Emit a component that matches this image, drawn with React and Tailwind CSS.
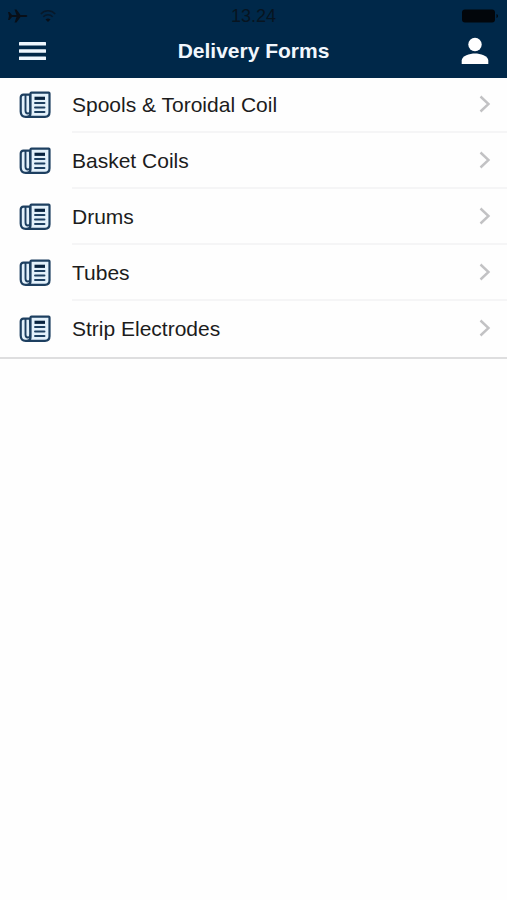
import React from 'react';

const forms = [
  { id: 'spools', label: 'Spools & Toroidal Coil' },
  { id: 'baskets', label: 'Basket Coils' },
  { id: 'drums', label: 'Drums' },
  { id: 'tubes', label: 'Tubes' },
  { id: 'strips', label: 'Strip Electrodes' },
];

function FormIcon() {
  return (
    <svg viewBox="0 0 32 28" className="w-8 h-7 shrink-0" fill="none" stroke="#1d3f60" strokeWidth="2.2" strokeLinejoin="round" strokeLinecap="round" aria-hidden="true">
      <path fill="#e3f1fb" d="M6.500 3.600H4.500C2.600 3.600 1.700 4.700 1.700 6.500v14c0 3.500 2 5.300 5 5.300h5L11 3.600z" />
      <path strokeWidth="1.900" d="M6.500 4v15.500c0 2 .8 3 2.300 3s2.500-1 2.500-2.500" />
      <path fill="#e3f1fb" d="M12.500 1.600h17.200c.5 0 .8.300.8.800v18.900c0 3-1.800 4.500-4.500 4.500H8.500c2 0 3-1.500 3-3.500V2.600c0-.6.400-1 1-1z" />
      <path strokeWidth="3.200" strokeLinecap="butt" d="M15.500 7.300h10.500" stroke="#08233f" />
      <path strokeWidth="1.900" d="M16 12h9.500M16 16.500h9.500M16 21h9.500" />
    </svg>
  );
}

function StatusBar() {
  return (
    <div className="grid grid-cols-3 items-center h-8 px-2 text-[#071420]">
      <div className="flex items-center gap-3">
        <svg viewBox="0 0 20 14" className="w-5 h-3.5" fill="#080f18" aria-hidden="true">
          <path d="M0 3h1.500L4 6h4.500L6.500.5H8.500L12.500 6H17c1.500 0 2.500.500 2.500 1S18.500 8 17 8h-4.500l-4 5.500H6.500L8.500 8H4l-2.500 3H0l1-4z" />
        </svg>
        <svg viewBox="0 0 16 14" className="w-4 h-3.5" fill="none" stroke="#071829" strokeWidth="1.500" aria-hidden="true">
          <path d="M.8 5c4-4.300 10.400-4.300 14.400 0M3.300 7.800c2.700-2.700 6.700-2.700 9.400 0" />
          <path fill="#080f18" stroke="none" d="M5.500 10.500c1.500-1.400 3.500-1.400 5 0L8 13z" />
        </svg>
      </div>
      <span className="text-center text-lg leading-8">13.24</span>
      <svg viewBox="0 0 38 14" className="w-[38px] h-3.5 justify-self-end" fill="#02060b" aria-hidden="true">
        <rect x="1" y="0.5" width="33" height="13" rx="3" />
        <path d="M35.500 5c2 .8 2 3.200 0 4z" />
      </svg>
    </div>
  );
}

function Header() {
  return (
    <header className="relative bg-[#002849] shadow-[0_1px_0_#002849]">
      <StatusBar />
      <div className="grid grid-cols-[1fr_auto_1fr] items-center h-[45px] px-4 pb-2">
        <button type="button" aria-label="Menu" className="justify-self-start px-[3px]">
          <svg viewBox="0 0 27 20" className="w-[27px] h-5" fill="#eef7ff" aria-hidden="true">
            <rect y="1" width="27" height="3.400" rx="0.500" />
            <rect y="8.300" width="27" height="3.400" rx="0.500" />
            <rect y="15.600" width="27" height="3.400" rx="0.500" />
          </svg>
        </button>
        <h1 className="text-[21px] leading-7 font-bold text-[#f1f7fd]">Delivery Forms</h1>
        <button type="button" aria-label="Profile" className="justify-self-end px-0.5">
          <svg viewBox="0 0 28 28" className="w-7 h-7" fill="#fff" aria-hidden="true">
            <circle cx="14" cy="7.500" r="6.700" />
            <path d="M.7 27v-3.500c0-4.500 8-7 13.300-7s13.300 2.500 13.300 7V27z" />
          </svg>
        </button>
      </div>
    </header>
  );
}

function FormRow({ label }) {
  return (
    <li className="group">
      <a href="#" className="flex items-stretch h-14 pl-[19px]">
        <span className="flex items-center w-[53px] shrink-0">
          <FormIcon />
        </span>
        <span className="flex flex-1 items-center justify-between pr-4 border-b-2 border-[#f5f5f6] group-last:border-transparent">
          <span className="pt-0.5 text-[21px] leading-7 text-[#1c1c1c]">{label}</span>
          <svg viewBox="0 0 12 18" className="w-3 h-[18px]" fill="none" stroke="#c2c2c4" strokeWidth="2.400" aria-hidden="true">
            <path d="M1.500 1.500L9.500 9l-8 7.500" />
          </svg>
        </span>
      </a>
    </li>
  );
}

export default function App() {
  return (
    <div className="min-h-screen bg-[#fefefe] font-['Liberation_Sans',Arial,sans-serif]">
      <Header />
      <main>
        <ul className="border-b-2 border-[#dededf]">
          {forms.map(form => (
            <FormRow key={form.id} label={form.label} />
          ))}
        </ul>
      </main>
    </div>
  );
}
